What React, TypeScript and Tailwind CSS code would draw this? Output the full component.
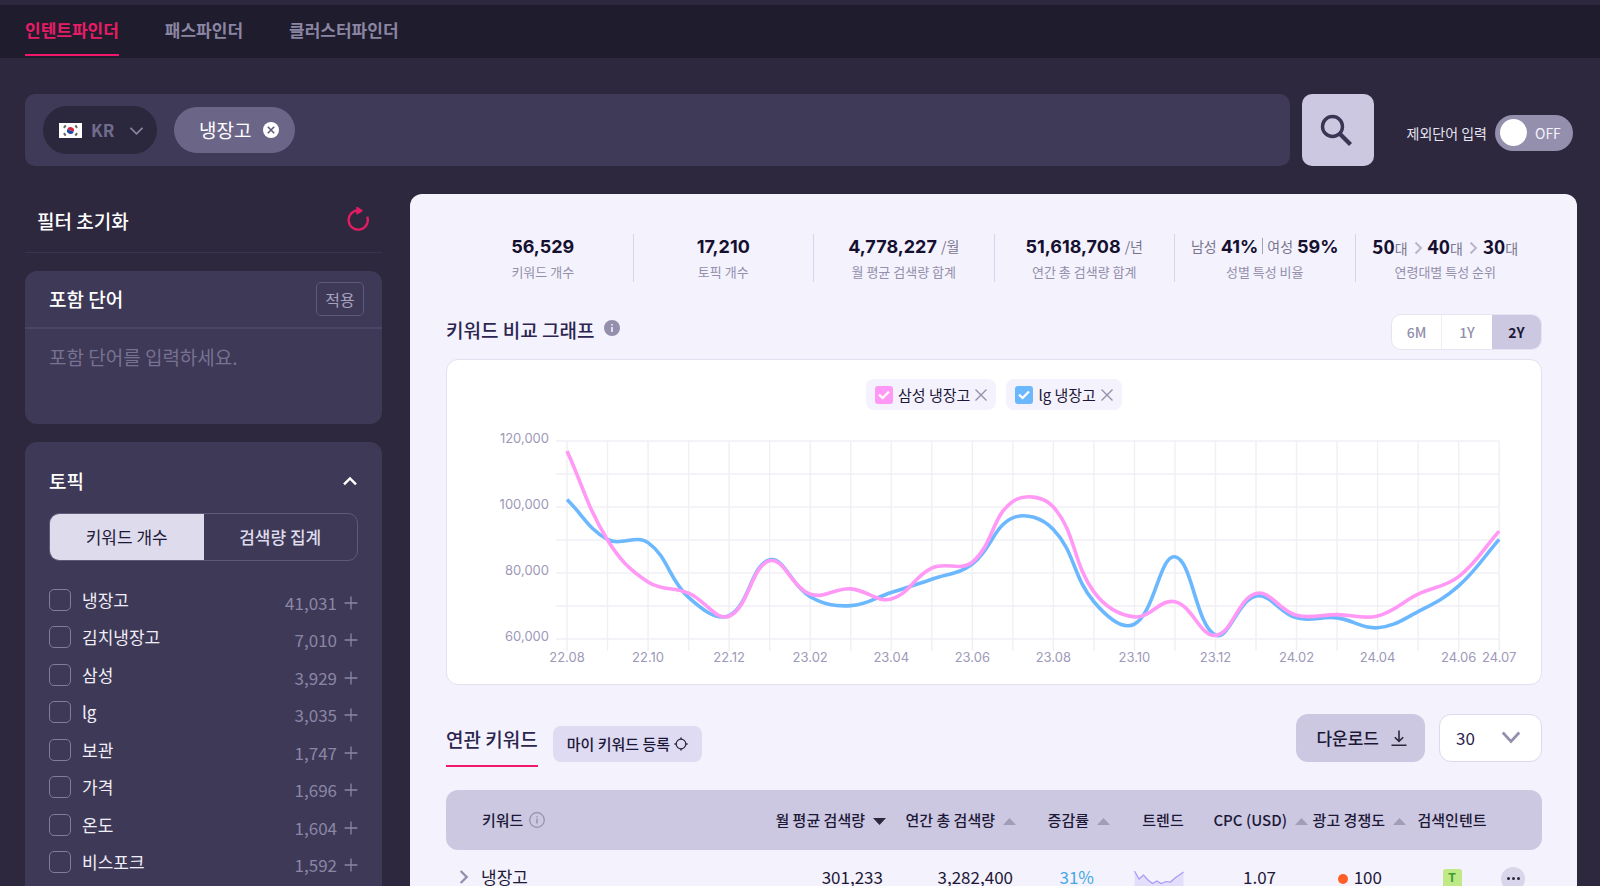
import type { ReactNode } from "react";

const NAV = ["인텐트파인더", "패스파인더", "클러스터파인더"];

const TOPICS: [string, string][] = [
  ["냉장고", "41,031"],
  ["김치냉장고", "7,010"],
  ["삼성", "3,929"],
  ["lg", "3,035"],
  ["보관", "1,747"],
  ["가격", "1,696"],
  ["온도", "1,604"],
  ["비스포크", "1,592"],
];

const MONTHS = [
  "22.08", "", "22.10", "", "22.12", "", "23.02", "", "23.04", "", "23.06", "",
  "23.08", "", "23.10", "", "23.12", "", "24.02", "", "24.04", "", "24.06", "24.07",
];

const SAMSUNG = [
  117000, 90000, 77300, 73900, 66900, 83700, 73600, 75200, 72100, 81500, 83300, 101700,
  100000, 74300, 66700, 71300, 61100, 73800, 67200, 67400, 67000, 73600, 78900, 92700,
];

const LG = [
  102300, 90200, 89200, 72600, 67100, 84000, 72800, 70100, 74100, 78100, 82700, 96700,
  93200, 71300, 64500, 84900, 61200, 73000, 66400, 66400, 63400, 68300, 76100, 90200,
];

const LEFT = 120;
const STEP = 40.53;
const xAt = (i: number) => LEFT + i * STEP;
const yAt = (v: number) => 11 + ((120000 - v) / 60000) * 198;

function smoothPath(values: number[]) {
  const p = values.map((v, i) => ({ x: xAt(i), y: yAt(v) }));
  const tension = 0.4;
  const control = p.map((c, i) => {
    const a = p[i - 1] ?? c;
    const b = p[i + 1] ?? c;
    const d0 = Math.hypot(c.x - a.x, c.y - a.y);
    const d1 = Math.hypot(b.x - c.x, b.y - c.y);
    const k0 = (tension * d0) / (d0 + d1);
    const k1 = (tension * d1) / (d0 + d1);
    return {
      px: c.x - k0 * (b.x - a.x),
      py: c.y - k0 * (b.y - a.y),
      nx: c.x + k1 * (b.x - a.x),
      ny: c.y + k1 * (b.y - a.y),
    };
  });
  let d = `M${p[0].x} ${p[0].y}`;
  for (let i = 1; i < p.length; i++) {
    d += ` C${control[i - 1].nx} ${control[i - 1].ny} ${control[i].px} ${control[i].py} ${p[i].x} ${p[i].y}`;
  }
  return d;
}

function Chart() {
  const right = xAt(23);
  return (
    <svg viewBox="0 0 1094 240" className="mt-5 block w-full" role="img" aria-label="키워드 비교 그래프">
      <g stroke="#f0eff4" strokeWidth="1.4">
        {[0, 1, 2, 3, 4, 5, 6].map((i) => (
          <line key={i} x1={LEFT - 11} x2={right} y1={11 + i * 33} y2={11 + i * 33} />
        ))}
        {MONTHS.map((_, i) => (
          <line key={i} x1={xAt(i)} x2={xAt(i)} y1={11} y2={221} />
        ))}
      </g>
      <path d={smoothPath(LG)} fill="none" stroke="#6cb8ff" strokeWidth="3.6" />
      <path d={smoothPath(SAMSUNG)} fill="none" stroke="#ff99f5" strokeWidth="3.6" />
      <g className="fill-[#9d99b8] font-[Inter,sans-serif] text-[13px]">
        {["120,000", "100,000", "80,000", "60,000"].map((t, i) => (
          <text key={t} x={102} y={13 + i * 66} textAnchor="end">
            {t}
          </text>
        ))}
        {MONTHS.map((t, i) => (
          <text key={i} x={xAt(i)} y={232} textAnchor="middle">
            {t}
          </text>
        ))}
      </g>
    </svg>
  );
}

function Chevron({ className, d, w = 2 }: { className: string; d: string; w?: number }) {
  return (
    <svg viewBox="0 0 24 24" className={className} fill="none" stroke="currentColor" strokeWidth={w} aria-hidden="true">
      <path d={d} />
    </svg>
  );
}

function Stat({ label, children }: { label: string; children: ReactNode }) {
  return (
    <div className="flex h-12 flex-1 flex-col items-center whitespace-nowrap border-l border-[#d8d4ec] first:border-l-0">
      <div className="flex h-6 items-center gap-1 text-[14px] text-[#79758f]">{children}</div>
      <div className="mt-1 text-[13px] leading-5 text-[#938fac]">{label}</div>
    </div>
  );
}

function Num({ children }: { children: ReactNode }) {
  return <strong className="font-[Inter,sans-serif] text-[18px] font-bold text-[#151030]">{children}</strong>;
}

function LegendChip({ id, label, box }: { id: string; label: string; box: string }) {
  return (
    <div className="flex h-[31px] items-center rounded-lg bg-[#f4f2fc] px-[9px]">
      <span className="relative flex">
        <input id={id} type="checkbox" defaultChecked className={`size-[18px] appearance-none rounded-[3px] ${box}`} />
        <svg viewBox="0 0 18 18" className="pointer-events-none absolute inset-0" fill="none" stroke="#fff" strokeWidth="2.2" aria-hidden="true">
          <path d="M4 8.6 7.6 12 14 5.4" />
        </svg>
      </span>
      <label htmlFor={id} className="ml-[5px] text-[15px] leading-5 text-[#1d1838]">
        {label}
      </label>
      <button type="button" aria-label={`${label} 삭제`} className="ml-[5px] text-[#938fac]">
        <svg viewBox="0 0 12 12" className="size-3" fill="none" stroke="currentColor" strokeWidth="1.4" aria-hidden="true">
          <path d="M.5.5 11.5 11.5M11.5.5.5 11.5" />
        </svg>
      </button>
    </div>
  );
}

function Sort({ down }: { down?: boolean }) {
  return (
    <svg viewBox="0 0 13 7" className="ml-2 inline-block h-[7px] w-[13px]" aria-hidden="true">
      {down ? <path d="M0 0H13L6.5 7Z" fill="#2b273c" /> : <path d="M0 7H13L6.5 0Z" fill="#a19cb8" />}
    </svg>
  );
}

function Rank({ n }: { n: string }) {
  return (
    <span className="flex items-baseline">
      <strong className="text-[19px] font-bold text-[#151030]">{n}</strong>대
    </span>
  );
}

function Sidebar() {
  return (
    <aside className="w-[357px] shrink-0">
      <div className="flex h-[59px] items-center justify-between border-b border-[#39344d] px-3 pb-1">
        <h2 className="text-[19px] leading-7 font-medium text-white">필터 초기화</h2>
        <button type="button" aria-label="필터 초기화" className="mb-1 text-[#e31c63]">
          <svg viewBox="0 0 24 24" className="size-6" fill="none" stroke="currentColor" strokeWidth="2.4" aria-hidden="true">
            <path d="M21.2 9.6A9.6 9.6 0 1 1 12 3.4" />
            <path d="M11 .4 16 3.6 11 6.8Z" fill="currentColor" strokeWidth="1.4" strokeLinejoin="round" />
          </svg>
        </button>
      </div>

      <section className="mt-[18px] h-[153px] overflow-hidden rounded-xl bg-[#3e3956]">
        <div className="flex h-[58px] items-center justify-between border-b-2 border-[#4a4564] pr-[18px] pl-6">
          <label htmlFor="include" className="text-[19px] leading-7 font-medium text-white">
            포함 단어
          </label>
          <button type="button" className="h-[34px] w-12 rounded-[5px] border border-[#5f5a7a] text-[16px] text-[#a6a2be]">
            적용
          </button>
        </div>
        <textarea
          id="include"
          placeholder="포함 단어를 입력하세요."
          className="block h-[95px] w-full resize-none bg-transparent px-6 pt-[14px] text-[19px] leading-7 text-white outline-none placeholder:text-[#777292]"
        />
      </section>

      <section className="mt-[18px] h-full rounded-t-xl bg-[#3e3956] px-6 pt-[25px]">
        <div className="flex items-center justify-between">
          <h3 className="text-[19px] leading-7 font-medium text-white">토픽</h3>
          <button type="button" aria-label="토픽 접기" className="text-white">
            <Chevron className="size-4" d="M3 17 12 8 21 17" w={3.6} />
          </button>
        </div>
        <div className="mt-[18px] flex h-12 overflow-hidden rounded-[10px] border border-[#5f5a7a] text-[17px]">
          <button type="button" className="flex-1 bg-[#dedcec] text-[#1d1838]">
            키워드 개수
          </button>
          <button type="button" className="flex-1 font-medium text-[#dedcec]">
            검색량 집계
          </button>
        </div>
        <ul className="mt-7 flex h-[284px] flex-col justify-between">
          {TOPICS.map(([name, count], i) => (
            <li key={name} className="flex h-[22px] items-center">
              <input
                id={`topic-${i}`}
                type="checkbox"
                className="size-[22px] appearance-none rounded-[5px] border border-[#817c9c]"
              />
              <label htmlFor={`topic-${i}`} className="ml-[11px] flex-1 text-[17px] leading-6 text-[#f0eef8]">
                {name}
              </label>
              <span className="flex items-center pt-[6px] text-[17px] leading-6 text-[#8b86a6]">
                {count}
                <button type="button" aria-label={`${name} 펼치기`} className="ml-[7px]">
                  <Chevron className="size-[14px]" d="M12 1V23M1 12H23" w={2.2} />
                </button>
              </span>
            </li>
          ))}
        </ul>
      </section>
    </aside>
  );
}

function KeywordTable() {
  const th = "whitespace-nowrap text-right";
  return (
    <table className="mt-[23px] w-full table-fixed border-separate border-spacing-0 text-[17px] text-[#1d1838]">
      <colgroup>
        <col />
        <col className="w-[136px]" />
        <col className="w-[130px]" />
        <col className="w-[94px]" />
        <col className="w-[98px]" />
        <col className="w-[100px]" />
        <col className="w-[98px]" />
        <col className="w-[92px]" />
        <col className="w-[44px]" />
      </colgroup>
      <thead className="text-[15px] text-[#1d1838] [&_th]:h-[60px] [&_th]:bg-[#ccc8e1] [&_th]:font-medium">
        <tr>
          <th className="rounded-l-xl pl-9 text-left">
            <span className="flex items-center">
              키워드
              <svg viewBox="0 0 16 16" className="ml-[6px] size-4" fill="none" stroke="#938fac" strokeWidth="1.2" aria-hidden="true">
                <circle cx="8" cy="8" r="7.3" />
                <path d="M8 6.8V11.6M8 4.2V5.6" strokeWidth="1.4" />
              </svg>
            </span>
          </th>
          <th className={th}>월 평균 검색량<Sort down /></th>
          <th className={th}>연간 총 검색량<Sort /></th>
          <th className={th}>증감률<Sort /></th>
          <th className="pl-2 text-center">트렌드</th>
          <th className={th}>CPC (USD)<Sort /></th>
          <th className={th}>광고 경쟁도<Sort /></th>
          <th className="text-center">검색인텐트</th>
          <th className="rounded-r-xl" aria-label="더보기" />
        </tr>
      </thead>
      <tbody>
        <tr className="leading-[18px] [&_td]:h-[53px]">
          <td>
            <span className="flex items-center">
              <button type="button" aria-label="냉장고 펼치기" className="ml-[10px] text-[#938fac]">
                <Chevron className="size-4" d="M7 3 16 12 7 21" w={3.6} />
              </button>
              <span className="ml-[9px]">냉장고</span>
            </span>
          </td>
          <td className="pr-[3px] text-right">301,233</td>
          <td className="pr-[3px] text-right">3,282,400</td>
          <td className="pr-4 text-right text-[#45a7e6]">31%</td>
          <td>
            <svg viewBox="0 0 50 28" className="mx-auto h-7 w-[50px]" aria-hidden="true">
              <path d="M.5 8 5 16 9.500 12 14 17 18.500 20.500 23 18 27 20.500 32 18.500 36.500 19 41 15 49.500 9V28H.5Z" fill="#e2defb" />
              <path d="M.5 8 5 16 9.500 12 14 17 18.500 20.500 23 18 27 20.500 32 18.500 36.500 19 41 15 49.500 9" fill="none" stroke="#a79af8" strokeWidth="1.2" />
            </svg>
          </td>
          <td className="pr-8 text-right">1.07</td>
          <td className="pr-6">
            <span className="flex items-center justify-end gap-[6px]">
              <span className="mt-1 size-[10px] rounded-full bg-[#ff5e26]" />
              100
            </span>
          </td>
          <td>
            <span className="mx-auto mt-[3px] flex size-[19px] items-center justify-center rounded-[3px] bg-[#bfe886] font-[Inter,sans-serif] text-[12px] leading-none font-bold text-[#3f9a34]">
              T
            </span>
          </td>
          <td>
            <button type="button" aria-label="더보기" className="mt-1 ml-[3px] flex size-6 items-center justify-center gap-[2px] rounded-full bg-[#d9d5ea]">
              <span className="size-[3px] rounded-full bg-[#2b273c]" />
              <span className="size-[3px] rounded-full bg-[#2b273c]" />
              <span className="size-[3px] rounded-full bg-[#2b273c]" />
            </button>
          </td>
        </tr>
      </tbody>
    </table>
  );
}

export default function App() {
  return (
    <div className="flex h-screen flex-col overflow-hidden bg-[#2d283e] font-['Noto_Sans_CJK_KR',sans-serif]">
      <header className="mt-[5px] h-[53px] shrink-0 bg-[#1f1c2d]">
        <nav className="flex gap-[46px] pl-[25px]">
          {NAV.map((t, i) => (
            <a
              key={t}
              href="#"
              className={
                i === 0
                  ? "h-[51px] border-b-2 border-[#f0186a] text-[17px] leading-[50px] font-bold text-[#e81c66]"
                  : "h-[51px] text-[17px] leading-[50px] font-bold text-[#8a86a3]"
              }
            >
              {t}
            </a>
          ))}
        </nav>
      </header>

      <div className="mt-9 flex shrink-0 items-center pr-[27px] pl-[25px]">
        <div className="flex h-[72px] flex-1 items-center rounded-[10px] bg-[#3f3a57] pl-[18px]">
          <button type="button" aria-label="국가 선택" className="flex h-12 w-[114px] items-center rounded-full bg-[#2b273c] pl-4">
            <svg viewBox="0 0 23 15" className="h-[15px] w-[23px]" aria-hidden="true">
              <rect width="23" height="15" fill="#fff" />
              <g transform="rotate(20 11.500 7.500)">
                <path d="M8 7.500a3.500 3.500 0 0 1 7 0Z" fill="#d8233c" />
                <path d="M8 7.500a3.500 3.500 0 0 0 7 0Z" fill="#1b4aa5" />
              </g>
              <path d="M4.900 4.800 6.700 2.400M16.300 12.600 18.100 10.200M4.900 10.200 6.700 12.600M16.300 2.400 18.100 4.800" stroke="#666" strokeWidth="2" />
            </svg>
            <span className="ml-[9px] text-[17px] leading-6 font-bold text-[#716c8e]">KR</span>
            <Chevron className="ml-4 size-[13px] text-[#8a86a3]" d="M1 7 12 18 23 7" w={3} />
          </button>
          <div className="ml-[17px] flex h-[46px] w-[121px] items-center rounded-full bg-[#6b6688] pl-[25px]">
            <span className="text-[19px] leading-7 text-white">냉장고</span>
            <button type="button" aria-label="냉장고 삭제" className="ml-3">
              <svg viewBox="0 0 16 16" className="size-4" aria-hidden="true">
                <circle cx="8" cy="8" r="8" fill="#fff" />
                <path d="M4.800 4.800 11.200 11.200M11.200 4.800 4.800 11.200" stroke="#5f5a7a" strokeWidth="1.600" />
              </svg>
            </button>
          </div>
          <input type="text" aria-label="키워드 입력" className="mx-4 h-full flex-1 bg-transparent text-[19px] text-white outline-none" />
        </div>
        <button type="button" aria-label="검색" className="ml-3 flex size-[72px] items-center justify-center rounded-[10px] bg-[#ccc8e1]">
          <svg viewBox="0 0 32 32" className="mr-1 size-8" fill="none" stroke="#3a3553" aria-hidden="true">
            <circle cx="12.500" cy="12.500" r="10" strokeWidth="3.400" />
            <path d="M19.500 19.500 30.500 30.500" strokeWidth="4.200" />
          </svg>
        </button>
        <label className="mt-[5px] ml-[33px] flex items-center gap-2 text-[14px] leading-5 text-[#e6e4f0]">
          제외단어 입력
          <input type="checkbox" role="switch" className="sr-only" />
          <span className="flex h-9 w-[78px] items-center rounded-full bg-[#938fac] pl-[5px]">
            <span className="size-[27px] rounded-full bg-white" />
            <span className="ml-2 text-[14px] text-[#f4f2fc]">OFF</span>
          </span>
        </label>
      </div>

      <div className="mt-7 flex min-h-0 flex-1 pr-[23px] pl-[25px]">
        <Sidebar />
        <main className="ml-7 min-w-0 flex-1 rounded-t-xl bg-[#f4f2fc] pr-[35px] pl-9">
          <div className="mx-[7px] mt-10 flex">
            <Stat label="키워드 개수"><Num>56,529</Num></Stat>
            <Stat label="토픽 개수"><Num>17,210</Num></Stat>
            <Stat label="월 평균 검색량 합계"><Num>4,778,227</Num><span>/월</span></Stat>
            <Stat label="연간 총 검색량 합계"><Num>51,618,708</Num><span>/년</span></Stat>
            <Stat label="성별 특성 비율">
              <span>남성</span><Num>41%</Num>
              <span className="h-4 w-px bg-[#a6a2be]" />
              <span>여성</span><Num>59%</Num>
            </Stat>
            <Stat label="연령대별 특성 순위">
              <Rank n="50" />
              <Chevron className="mt-1 size-3 text-[#b7b3cc]" d="M7 1 18 12 7 23" w={3.8} />
              <Rank n="40" />
              <Chevron className="mt-1 size-3 text-[#b7b3cc]" d="M7 1 18 12 7 23" w={3.8} />
              <Rank n="30" />
            </Stat>
          </div>

          <div className="mt-8 flex h-9 items-center justify-between">
            <h2 className="flex items-center pb-[5px] text-[19px] leading-7 font-medium text-[#2b2550]">
              키워드 비교 그래프
              <svg viewBox="0 0 16 16" className="mb-[3px] ml-[10px] size-4" aria-hidden="true">
                <circle cx="8" cy="8" r="8" fill="#938fac" />
                <path d="M8 7V12M8 4V5.600" stroke="#f4f2fc" strokeWidth="1.600" />
              </svg>
            </h2>
            <div className="flex h-9 w-[151px] overflow-hidden rounded-[10px] border border-[#e6e3f3] bg-white text-[14px] font-medium text-[#938fac]">
              <button type="button" className="flex-1">6M</button>
              <button type="button" className="flex-1 border-l border-[#efedf8]">1Y</button>
              <button type="button" className="flex-1 bg-[#ccc8e1] font-bold text-[#1d1838]">2Y</button>
            </div>
          </div>

          <section className="mt-[9px] rounded-xl border border-[#e3e0f2] bg-white pt-[19px] pb-[14px]">
            <div className="flex justify-center gap-[10px]">
              <LegendChip id="s1" label="삼성 냉장고" box="bg-[#ff99f5]" />
              <LegendChip id="s2" label="lg 냉장고" box="bg-[#6cb8ff]" />
            </div>
            <Chart />
          </section>

          <div className="mt-[29px] flex items-start">
            <h2 className="h-[53px] border-b-2 border-[#f0186a] text-[19px] leading-[49px] font-medium text-[#2b2550]">연관 키워드</h2>
            <button type="button" className="mt-3 ml-[15px] flex h-9 items-center rounded-lg bg-[#dedbf2] px-[14px] text-[15px] leading-5 font-medium text-[#1d1838]">
              마이 키워드 등록
              <svg viewBox="0 0 14 14" className="ml-1 size-[14px]" fill="none" stroke="#2b273c" aria-hidden="true">
                <circle cx="7" cy="7" r="4.800" strokeWidth="1.200" />
                <path d="M7 .4V2.400M7 11.600V13.600M.4 7H2.400M11.600 7H13.600" strokeWidth="1.400" />
              </svg>
            </button>
            <button type="button" className="ml-auto flex h-12 items-center rounded-xl bg-[#ccc8e1] pr-[18px] pl-5 text-[17px] leading-6 font-medium text-[#1d1838]">
              다운로드
              <svg viewBox="0 0 16 16" className="ml-3 size-4" fill="none" stroke="#2b273c" strokeWidth="1.600" aria-hidden="true">
                <path d="M8 .5V11M3.800 7.200 8 11.400 12.200 7.200M.5 15.200H15.500" />
              </svg>
            </button>
            <div className="relative ml-[14px]">
              <select aria-label="표시 개수" className="h-12 w-[103px] appearance-none rounded-xl border border-[#dcd9ee] bg-white pl-4 text-[17px] text-[#2b2550]">
                <option>30</option>
              </select>
              <Chevron className="pointer-events-none absolute top-[14px] right-[22px] size-[18px] text-[#938fac]" d="M1 6 12 18 23 6" w={3.6} />
            </div>
          </div>

          <KeywordTable />
        </main>
      </div>
    </div>
  );
}
